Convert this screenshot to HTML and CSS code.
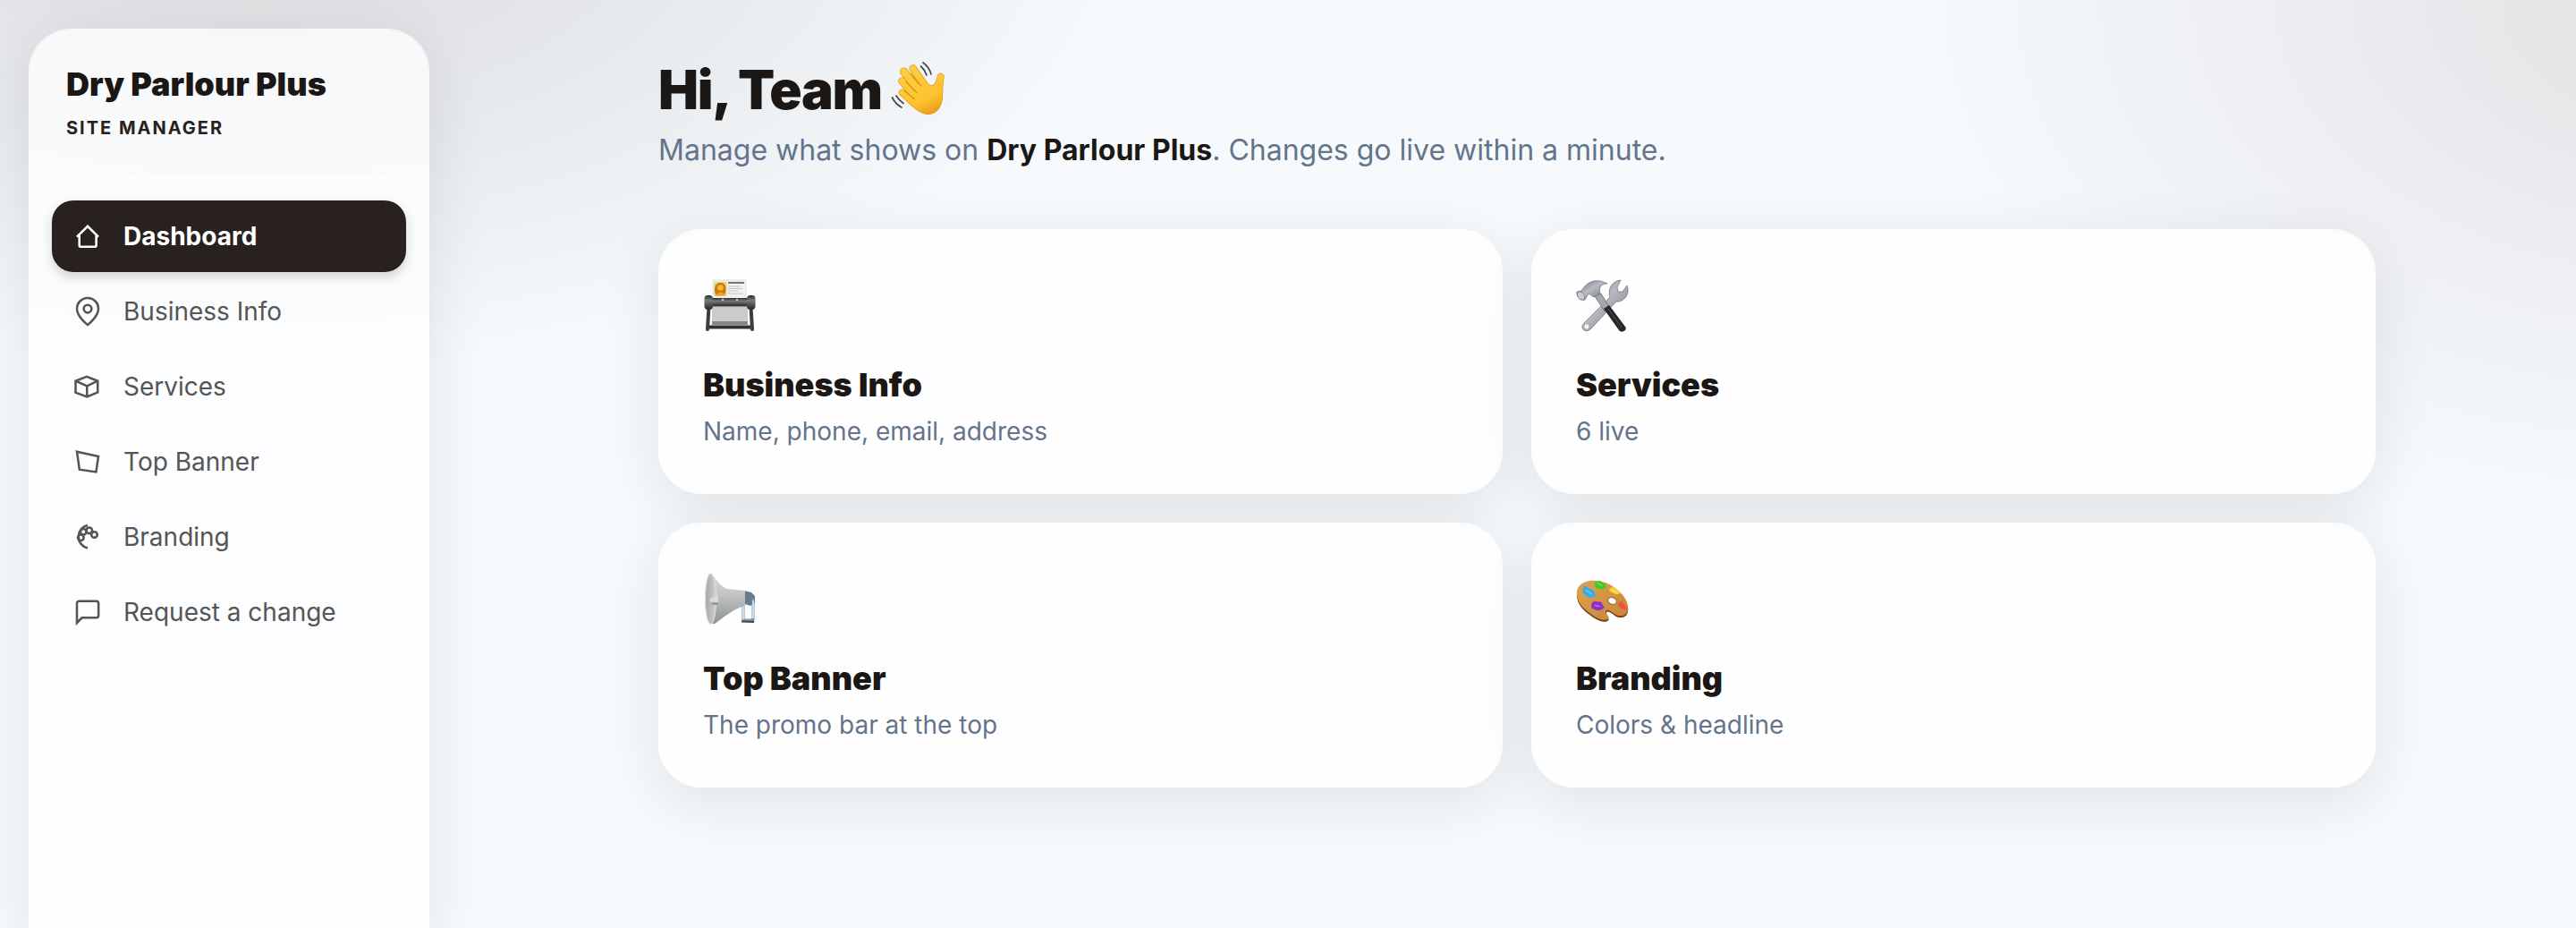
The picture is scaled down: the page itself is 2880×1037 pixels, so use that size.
FILE: index.html
```html
<!DOCTYPE html>
<html lang="en">
<head>
<meta charset="utf-8">
<title>Dry Parlour Plus</title>
<link rel="stylesheet" href="styles.css">
</head>
<body>
<div class="app">
  <aside class="sidebar">
    <div class="brand">
      <div class="brand-name">Dry Parlour Plus</div>
      <div class="brand-role">SITE MANAGER</div>
    </div>
    <nav class="nav">
      <a class="nav-item active"><svg class="icon" viewBox="0 0 24 24"><path d="M4 12.4l8-7.8 8 7.8M5.8 11.200v7.600a1 1 0 0 0 1 1h10.600a1 1 0 0 0 1-1v-7.600"/></svg><span>Dashboard</span></a>
      <a class="nav-item"><svg class="icon" viewBox="0 0 24 24"><path d="M20 10c0 6-8 12-8 12s-8-6-8-12a8 8 0 0 1 16 0z"/><circle cx="12" cy="10" r="2.900"/></svg><span>Business Info</span></a>
      <a class="nav-item"><svg class="icon" viewBox="0 0 24 24"><path d="M11.300 4.600L3 7.800v8.600l8.500 3.200 8-3.400V7.800zM3 7.800l8.500 3.800 8-3.800M11.500 11.600v8"/></svg><span>Services</span></a>
      <a class="nav-item"><svg class="icon" viewBox="0 0 24 24"><path d="M4 4.500L20 8l-1.700 11.600-12.400-1.800z"/></svg><span>Top Banner</span></a>
      <a class="nav-item"><svg class="icon" viewBox="0 0 24 24"><path d="M12 3.300a8.700 8.700 0 0 0 0 17"/><circle cx="6.900" cy="12.500" r="2.200"/><circle cx="8.800" cy="8.200" r="2.200"/><circle cx="13.200" cy="7.200" r="2.200"/><circle cx="17" cy="10.300" r="2.200"/></svg><span>Branding</span></a>
      <a class="nav-item"><svg class="icon" viewBox="0 0 24 24"><path d="M4 20V5.500a1.700 1.700 0 0 1 1.700-1.700h12.700a1.700 1.700 0 0 1 1.700 1.700v9a1.700 1.700 0 0 1-1.700 1.700H7.700z"/></svg><span>Request a change</span></a>
    </nav>
  </aside>

  <main class="main">
    <div class="content">
      <header class="header">
        <h1 class="greeting"><span>Hi, Team</span>
          <svg class="wave" viewBox="15 15 70 70">
            <defs><linearGradient id="skin" gradientUnits="userSpaceOnUse" x1="35" y1="25" x2="62" y2="78"><stop offset="0" stop-color="#ffcf3f"/><stop offset="0.700" stop-color="#fdc22e"/><stop offset="1" stop-color="#eb9c1c"/></linearGradient></defs>
            <g stroke="#dc9420" stroke-linecap="round" stroke-linejoin="round" fill="#dc9420">
              <path stroke-width="8.600" d="M41.700 26.500L56 47"/><path stroke-width="9" d="M31.500 30L48 51"/><path stroke-width="8.600" d="M29.500 40.500L44 58"/><path stroke-width="7.600" d="M29.500 53.500L43 66"/>
              <path stroke-width="1.200" d="M44 44L57 42L61 46C65 46 67 44 68 40L69.500 34.500C70.500 31 76.500 31.500 76 36C75 43 74.500 50 74.500 58C74 70 67 77.500 58 77.500C51 77 46 73 38 65L36 54Z"/>
            </g>
            <g stroke="url(#skin)" stroke-linecap="round" fill="url(#skin)">
              <path stroke-width="7.200" d="M29.500 40.500L44 58"/><path stroke-width="6.200" d="M29.500 53.500L43 66"/><path stroke-width="7.600" d="M31.500 30L48 51"/><path stroke-width="7.200" d="M41.700 26.500L56 47"/>
              <path stroke="none" d="M44 44L57 42L61 46C65 46 67 44 68 40L69.500 34.500C70.500 31 76.500 31.500 76 36C75 43 74.500 50 74.500 58C74 70 67 77.500 58 77.500C51 77 46 73 38 65L36 54Z"/>
            </g>
            <path fill="none" stroke="#d99020" stroke-width="1.300" stroke-linecap="round" d="M39 32.500L51 46M34 41.500L46 53.500M33 52L43 60.500"/>
            <path fill="none" stroke="#46494e" stroke-width="1.700" stroke-linecap="round" d="M53 20Q60 25 62 33M50.500 24Q55 28 57 34M18.500 59Q22 66 29 70M23 57Q26 62 31 65.500"/>
          </svg>
        </h1>
        <p class="lede">Manage what shows on <strong>Dry Parlour Plus</strong>. Changes go live within a minute.</p>
      </header>

      <section class="cards">
        <a class="card">
          <svg class="art" viewBox="0 0 60 60">
            <defs><linearGradient id="roll" x1="0" y1="0" x2="0" y2="1"><stop offset="0" stop-color="#292b2d"/><stop offset="0.350" stop-color="#777a7c"/><stop offset="1" stop-color="#242628"/></linearGradient></defs>
            <path fill="#f1f1ef" stroke="#d2d2d0" stroke-width="0.600" d="M11 1h37v22H11z"/>
            <path fill="#f3d27a" d="M12.500 3h14v16h-14z"/>
            <path fill="#c67a14" d="M14 17c-3-8 1-14 6-13 6 0 7 8 4 13z"/><circle cx="19.500" cy="9.500" r="3.300" fill="#f5b932"/><path fill="#eaa520" d="M14 18.500q5.500-8 11 0z"/>
            <path stroke="#47494b" stroke-width="1.500" d="M28 4h18"/><path stroke="#b2b4b5" stroke-width="0.700" d="M28 8h14M28 10.500h16M28 13h12M28 16h17"/>
            <path fill="#cbcbcb" d="M10 31h40v16H10z"/><path fill="#858789" d="M10 47h40v4H10z"/>
            <path fill="none" stroke="#3b3d3f" stroke-width="4" stroke-linecap="round" d="M6.500 31L5 56M53.500 31L55 56"/>
            <path stroke="#303234" stroke-width="4" d="M7 53.500h46"/>
            <rect x="6" y="21" width="48" height="9.500" fill="url(#roll)"/>
            <rect x="1.500" y="18" width="9.500" height="16" rx="4" fill="url(#roll)"/><rect x="49" y="18" width="9.500" height="16" rx="4" fill="url(#roll)"/>
            <circle cx="22" cy="23" r="1.300" fill="#bec0c2"/><circle cx="38" cy="23" r="1.300" fill="#bec0c2"/>
          </svg>
          <h2>Business Info</h2><p>Name, phone, email, address</p>
        </a>
        <a class="card">
          <svg class="art" viewBox="0 0 60 60">
            <defs><linearGradient id="steel" x1="0" y1="0" x2="1" y2="1"><stop offset="0" stop-color="#6a6d75"/><stop offset="0.450" stop-color="#b9bbc2"/><stop offset="1" stop-color="#6d6f77"/></linearGradient></defs>
            <path fill="url(#steel)" stroke="#65686d" stroke-width="0.700" d="M38 20C35 10 41 2 50 1L46 9 47 14 52 14 57 7C61 17 53 26 45 25L17 55C12 61 4 56 8 50Z"/>
            <circle cx="12" cy="53" r="2.400" fill="#f7f9fc"/>
            <path fill="#a5a7ad" stroke="#67696f" stroke-width="0.800" d="M21 19l7-3 9 15-5 5z"/>
            <path fill="#25272a" d="M31 33l6-4 18 24c3 4-4 8-7 4z"/><path stroke="#54575b" stroke-width="1" d="M36 33l15 21"/>
            <path fill="url(#steel)" stroke="#696b71" stroke-width="0.700" d="M6 13C13 1 24-1 35 5C28 5 25 9 27 16L20 20 14 16 10 23C5 25 0 18 1 14Z"/>
            <ellipse cx="5.500" cy="18.500" rx="3.600" ry="5" transform="rotate(-35 5.500 18.500)" fill="#c9cbd0" stroke="#7c7e84" stroke-width="0.800"/>
          </svg>
          <h2>Services</h2><p>6 live</p>
        </a>
        <a class="card">
          <svg class="art" viewBox="0 0 60 60">
            <defs><linearGradient id="horn" x1="0" y1="0" x2="0" y2="1"><stop offset="0" stop-color="#dcdddd"/><stop offset="0.400" stop-color="#c3c5c5"/><stop offset="1" stop-color="#909394"/></linearGradient><linearGradient id="bell"><stop offset="0" stop-color="#a3a6a6"/><stop offset="1" stop-color="#cfd1d1"/></linearGradient></defs>
            <path fill="#667b8d" d="M46 20l8 2 4 4v8l-5 3-9-3z"/>
            <path fill="none" stroke="#7b93a6" stroke-width="3" d="M45 33v20h11V29"/><path stroke="#c8dce9" stroke-width="2" d="M45 34v18M56 31v20"/>
            <path stroke="#3e464e" stroke-width="2" d="M43 54.500l14 .5"/>
            <path fill="url(#horn)" d="M7 1C13 1 15 13 27 18L47 20V37C34 40 22 51 13 57H7z"/>
            <ellipse cx="8.500" cy="29" rx="6" ry="28" fill="url(#bell)" stroke="#d9dcdc" stroke-width="1.200"/>
            <path fill="#d8dada" d="M9 28l8-3v8H9q-3-2 0-5z"/><path fill="#9a9c9d" d="M9 33h8v3h-7z"/>
          </svg>
          <h2>Top Banner</h2><p>The promo bar at the top</p>
        </a>
        <a class="card">
          <svg class="art" viewBox="0 -3.500 60 60">
            <defs><linearGradient id="wood" x1="0" y1="0" x2="1" y2="1"><stop offset="0" stop-color="#dda253"/><stop offset="1" stop-color="#c98436"/></linearGradient></defs>
            <path fill="#754315" d="M1 19C3 7 19 3 34 10C48 16 60 29 58 40C57 47 49 48 44 45C39 41 34 38 34 42C34 45 38 47 36 50C31 54 21 48 13 42C5 36 0 28 1 19Z"/>
            <path fill="url(#wood)" d="M1 17C3 6 19 2 34 8C48 14 60 27 58 38C57 45 49 46 44 43C39 40 34 36 33 40C33 43 38 45 36 48C31 52 21 46 13 40C5 34 0 26 1 17Z"/>
            <ellipse cx="40.500" cy="28" rx="5" ry="3.700" transform="rotate(20 40.500 28)" fill="#fbfdff" stroke="#8b531e" stroke-width="0.800"/>
            <path fill="#38ace6" d="M8 12q3-2 6 2 5 0 7 5 2 5-3 5-3 2-6-2-5-1-4-6z"/>
            <path fill="#45c928" d="M21 7q6-3 8 0 6 3 4 6-4 4-7 1-6 1-5-7z"/>
            <path fill="#f7d52e" d="M38 14q4-3 5 0 6 1 6 6-5 2-9-2-5-1-2-4z"/>
            <path fill="#f0533b" d="M49 29q3-1 5 3 4 3 3 6-5 0-8-3-4-2 0-6z"/>
            <path fill="#8c31c5" d="M18 30q3-3 6-1 5-1 6 4 3 2 0 4-5 3-8 1-7-1-4-8z"/>
            <path fill="none" stroke="#ffffff" stroke-opacity="0.350" stroke-width="1.400" stroke-linecap="round" d="M11 16l6 4M24 8l5 3M40 16l4 2M21 33l5 1"/>
          </svg>
          <h2>Branding</h2><p>Colors &amp; headline</p>
        </a>
      </section>
    </div>
  </main>
</div>
</body>
</html>
```
FILE: styles.css
```css
* { box-sizing: border-box; }

body {
  margin: 0;
  height: 1037px;
  overflow: hidden;
  font-family: Inter, "Liberation Sans", sans-serif;
  color: #1a1714;
  background:
    radial-gradient(1650px 870px at 10% -10%, rgba(45, 30, 28, 0.150), transparent 60%),
    radial-gradient(1500px 960px at 105% 0, rgba(60, 20, 20, 0.110), transparent 60%),
    #f6fafd;
}

.app { display: flex; height: 1037px; }

.sidebar {
  flex: none;
  width: 448px;
  margin: 32px 0 0 32px;
  border: 2px solid rgba(255, 255, 255, 0.700);
  border-bottom: 0;
  border-radius: 48px 48px 0 0;
  background: rgba(253, 254, 255, 0.800);
  background-clip: padding-box;
  box-shadow: 0 16px 64px rgba(41, 33, 32, 0.100);
}

.brand {
  height: 166px;
  padding: 38px 40px 0;
  border-bottom: 2px solid rgba(255, 255, 255, 0.500);
}
.brand-name {
  font-size: 36px;
  line-height: 45px;
  font-weight: 900;
}
.brand-role {
  margin-top: 12px;
  color: #292120;
  font-size: 20px;
  line-height: 28px;
  font-weight: 700;
  letter-spacing: 2px;
}

.nav {
  display: flex;
  flex-direction: column;
  gap: 4px;
  padding: 24px 24px 0;
}
.nav-item {
  display: flex;
  align-items: center;
  gap: 22px;
  height: 80px;
  padding-left: 22px;
  border-radius: 24px;
  color: #555;
  font-size: 28px;
  font-weight: 400;
}
.nav-item.active {
  color: #fff;
  background: #292120;
  font-weight: 700;
  box-shadow: 0 6px 12px rgba(41, 33, 32, 0.180);
}

.icon {
  width: 36px;
  height: 36px;
  fill: none;
  stroke: currentColor;
  stroke-width: 1.700;
}

.main { flex: 1; margin-left: 32px; }
.content { width: 1920px; margin: 0 auto; padding-top: 64px; }
.header { height: 192px; }

.greeting {
  display: flex;
  align-items: center;
  gap: 8px;
  height: 72px;
  margin: 0;
  font-size: 60px;
  line-height: 72px;
  font-weight: 900;
  letter-spacing: -1.200px;
}
.wave { width: 70px; height: 70px; }

.lede {
  margin: 12px 0 0;
  color: #64748b;
  font-size: 32px;
  line-height: 40px;
}
.lede strong { color: #1a1714; font-weight: 700; }

.cards {
  display: grid;
  grid-template-columns: 1fr 1fr;
  gap: 32px;
}
.card {
  height: 296px;
  padding: 54px 48px 0;
  border: 2px solid rgba(255, 255, 255, 0.700);
  border-radius: 48px;
  background: rgba(255, 255, 255, 0.820);
  background-clip: padding-box;
  box-shadow: 0 16px 64px rgba(41, 33, 32, 0.100);
}
.art { display: block; width: 60px; height: 60px; }
.card h2 {
  margin: 36px 0 0;
  font-size: 36px;
  line-height: 44px;
  font-weight: 900;
}
.card p {
  margin: 12px 0 0;
  color: #64748b;
  font-size: 28px;
  line-height: 36px;
}
```
